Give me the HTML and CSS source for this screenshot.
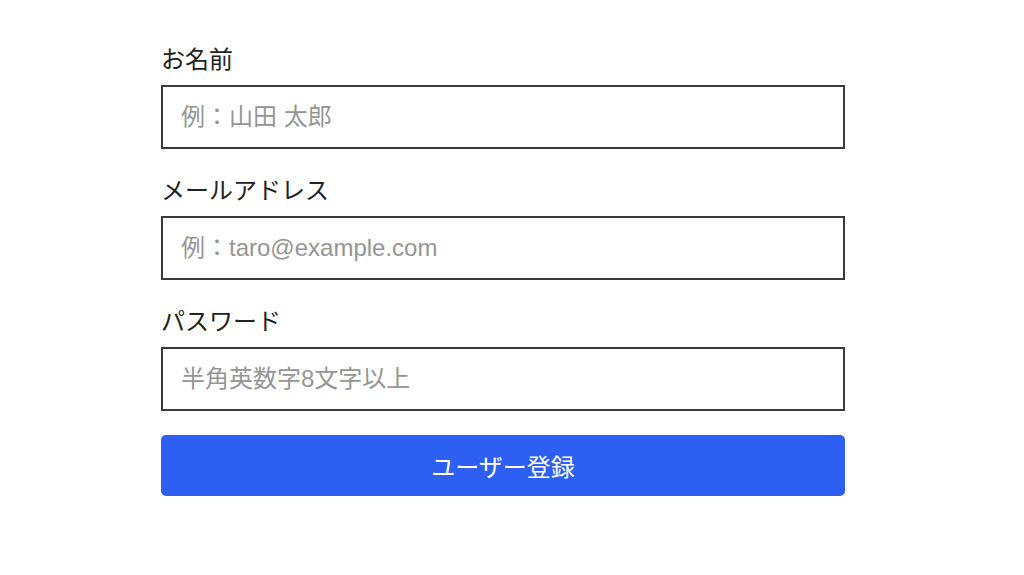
FILE: index.html
```html
<!DOCTYPE html>
<html lang="ja">
<head>
    <meta charset="UTF-8">
    <meta name="viewport" content="width=device-width, initial-scale=1.0">
    <title>ユーザー登録</title>
    <link rel="stylesheet" href="styles.css">
</head>
<body>
    <form class="signup-form" onsubmit="return false">
        <div class="form-group">
            <label for="name">お名前</label>
            <input type="text" id="name" placeholder="例：山田 太郎">
        </div>
        <div class="form-group">
            <label for="email">メールアドレス</label>
            <input type="email" id="email" placeholder="例：taro@example.com">
        </div>
        <div class="form-group">
            <label for="password">パスワード</label>
            <input type="password" id="password" placeholder="半角英数字8文字以上">
        </div>
        <button type="submit">ユーザー登録</button>
    </form>
</body>
</html>
```

FILE: styles.css
```css
body {
    font-family: "Liberation Sans", "Noto Sans CJK JP", sans-serif;
    background-color: #fff;
    color: #222;
    margin: 0;
    padding: 45px 0 0 161px;
}

.signup-form {
    width: 684px;
}

.form-group {
    margin-bottom: 27px;
}

.form-group:last-of-type {
    margin-bottom: 24px;
}

label {
    display: block;
    font-size: 24px;
    line-height: 30px;
    margin-bottom: 10px;
}

input {
    display: block;
    box-sizing: border-box;
    width: 100%;
    height: 64px;
    padding: 0 18px;
    border: 2px solid #3a3a3a;
    border-radius: 0;
    font-family: inherit;
    font-size: 24px;
    color: #222;
    outline: none;
}

input::placeholder {
    color: #959595;
}

button {
    display: block;
    width: 100%;
    height: 61px;
    border: none;
    border-radius: 5px;
    background-color: #2d5ff2;
    color: #fff;
    font-family: inherit;
    font-size: 24px;
    cursor: pointer;
}
```
